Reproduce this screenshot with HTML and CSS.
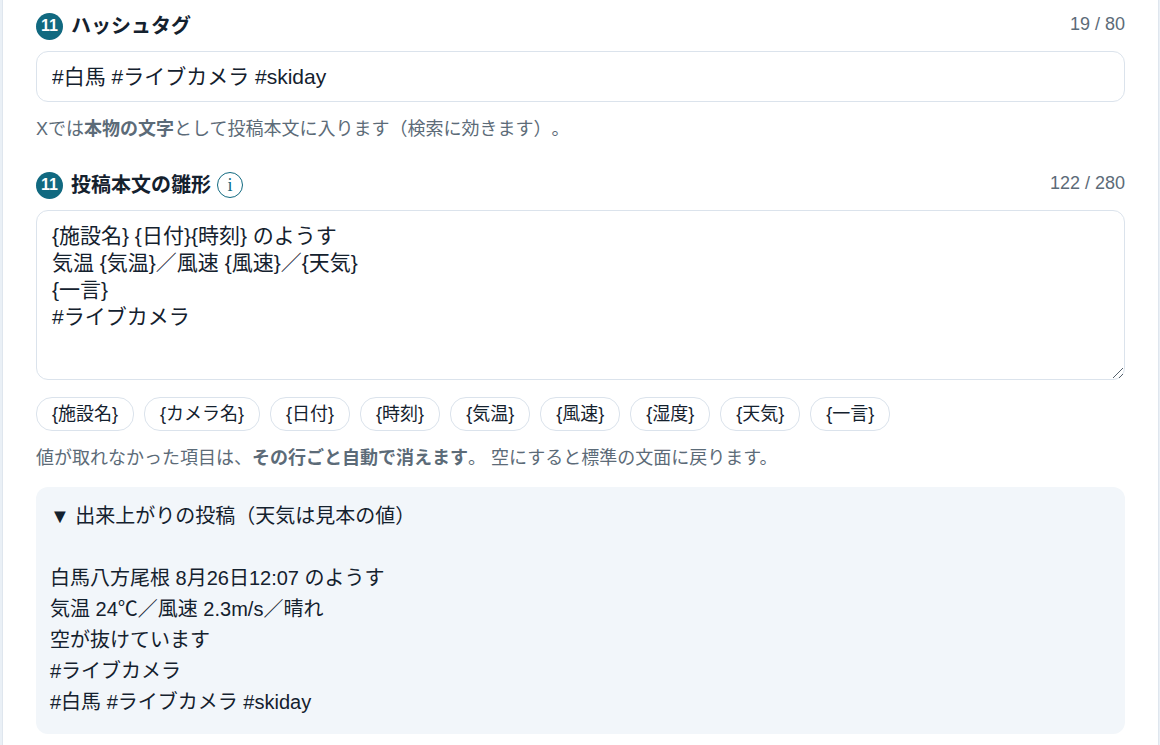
FILE: index.html
```html
<!DOCTYPE html>
<html lang="ja">
<head>
<meta charset="utf-8">
<title>投稿設定</title>
<link rel="stylesheet" href="styles.css">
</head>
<body>
<main class="panel">
  <section class="field">
    <div class="field-head">
      <span class="step">11</span>
      <label class="field-label" for="tags">ハッシュタグ</label>
      <span class="count">19 / 80</span>
    </div>
    <input class="control tags" id="tags" type="text" value="#白馬 #ライブカメラ #skiday">
    <p class="hint">Xでは<b>本物の文字</b>として投稿本文に入ります（検索に効きます）。</p>
  </section>
  <section class="field">
    <div class="field-head">
      <span class="step">11</span>
      <label class="field-label" for="template">投稿本文の雛形</label>
      <button class="info" type="button">i</button>
      <span class="count">122 / 280</span>
    </div>
    <div class="template-box">
      <textarea class="control template" id="template" rows="5">{施設名} {日付}{時刻} のようす
気温 {気温}／風速 {風速}／{天気}
{一言}
#ライブカメラ</textarea>
      <svg class="grip" viewBox="0 0 12 12" aria-hidden="true"><path d="M1 11 11 1M7 11l4-4"/></svg>
    </div>
    <div class="chips">
      <button class="chip" type="button">{施設名}</button>
      <button class="chip" type="button">{カメラ名}</button>
      <button class="chip" type="button">{日付}</button>
      <button class="chip" type="button">{時刻}</button>
      <button class="chip" type="button">{気温}</button>
      <button class="chip" type="button">{風速}</button>
      <button class="chip" type="button">{湿度}</button>
      <button class="chip" type="button">{天気}</button>
      <button class="chip" type="button">{一言}</button>
    </div>
    <p class="hint">値が取れなかった項目は、<b>その行ごと自動で消えます</b>。 空にすると標準の文面に戻ります。</p>
    <div class="preview">▼ 出来上がりの投稿（天気は見本の値）

白馬八方尾根 8月26日12:07 のようす
気温 24℃／風速 2.3m/s／晴れ
空が抜けています
#ライブカメラ
#白馬 #ライブカメラ #skiday</div>
  </section>
</main>
</body>
</html>
```
FILE: styles.css
```css
* {
  box-sizing: border-box;
}

body {
  margin: 0;
  padding: 0 1px 0 2px;
  background: #eaf0f6;
  color: #14212e;
  font-family: "Liberation Sans", "Noto Sans CJK JP", sans-serif;
  text-spacing-trim: space-all;
}

.panel {
  display: flex;
  flex-direction: column;
  gap: 27px;
  min-height: 100vh;
  padding: 11px 33px;
  background: #fff;
  border: solid #dfe6ee;
  border-width: 0 1px;
}

.field {
  display: flex;
  flex-direction: column;
}

.field-head {
  display: flex;
  align-items: center;
  min-height: 30px;
  margin-bottom: 10px;
}

.step {
  width: 27px;
  height: 27px;
  margin-right: 8px;
  border-radius: 50%;
  background: #116980;
  color: #fff;
  font-size: 16px;
  font-weight: 700;
  line-height: 26px;
  text-align: center;
}

.field-label {
  font-size: 20px;
  font-weight: 700;
  line-height: 30px;
}

.info {
  width: 26px;
  height: 26px;
  margin-left: 6px;
  padding: 0;
  border: 1px solid #116980;
  border-radius: 50%;
  background: #fff;
  color: #116980;
  font: 400 18px/22px "Liberation Serif", serif;
}

.count {
  align-self: flex-start;
  margin-left: auto;
  color: #5c6b78;
  font-size: 18px;
  line-height: 26px;
}

.control {
  display: block;
  width: 100%;
  margin: 0;
  padding: 11px 15px;
  border: 1px solid #dbe3ec;
  border-radius: 12px;
  background: #fff;
  color: inherit;
  font-family: inherit;
  font-size: 21px;
  line-height: 27px;
}

.tags {
  height: 51px;
  padding: 8px 15px 12px;
}

.template-box {
  position: relative;
}

.template {
  height: 170px;
  resize: none;
}

.grip {
  position: absolute;
  right: 1px;
  bottom: 1px;
  width: 12px;
  height: 12px;
  fill: none;
  stroke: #55616c;
  stroke-width: 1;
}

.hint {
  margin: 14px 0 0;
  color: #5c6b78;
  font-size: 18px;
  line-height: 27px;
}

.chips {
  display: flex;
  flex-wrap: wrap;
  gap: 10px;
  margin-top: 17px;
}

.chip {
  padding: 3px 15px;
  border: 1px solid #dbe3ec;
  border-radius: 16px;
  background: #fff;
  color: inherit;
  font-family: inherit;
  font-size: 18px;
  line-height: 26px;
}

.preview {
  margin-top: 15px;
  padding: 14px 14px 16px;
  border-radius: 12px;
  background: #f2f6fa;
  font-size: 20px;
  line-height: 31px;
  white-space: pre-wrap;
}
```
